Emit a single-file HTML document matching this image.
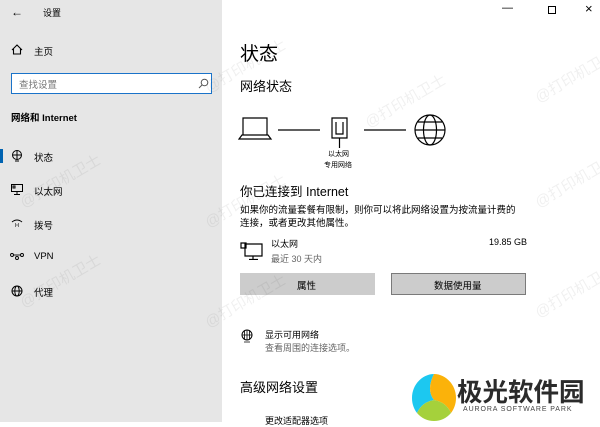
<!DOCTYPE html>
<html><head><meta charset="utf-8"><style>
*{margin:0;padding:0;box-sizing:border-box}
body{width:600px;height:422px;overflow:hidden;position:relative;background:#fff;font-family:"Liberation Sans","Noto Sans CJK SC",sans-serif;color:#000}
.side{position:absolute;left:0;top:0;width:222px;height:422px;background:#e6e6e6}
.t{position:absolute;white-space:nowrap}
svg{position:absolute}
.wm{position:absolute;color:rgba(0,0,0,0.06);font-size:15px;transform:rotate(-30deg);white-space:nowrap}
</style></head><body>
<div class="side">
<div class="t" style="left:11px;top:5px;font-size:12px">←</div>
<div class="t" style="left:43px;top:6px;font-size:9px">设置</div>
<svg style="left:11px;top:44px" width="12" height="11" viewBox="0 0 12 11"><path d="M1 6L6 1l5 5M2.5 5v5h7V5" fill="none" stroke="#000" stroke-width="1.1"/></svg>
<div class="t" style="left:34px;top:44px;font-size:9.5px">主页</div>
<div style="position:absolute;left:11px;top:73px;width:201px;height:21px;background:#fff;border:1.5px solid #1a73c9"></div>
<div class="t" style="left:19px;top:77px;font-size:9.5px;color:#777">查找设置</div>
<svg style="left:198px;top:78px" width="11" height="11" viewBox="0 0 11 11"><circle cx="6.5" cy="4.5" r="3.3" fill="none" stroke="#555"/><path d="M4 7L1 10" stroke="#555"/></svg>
<div class="t" style="left:11px;top:110px;font-size:9.5px;font-weight:bold">网络和 Internet</div>
<div style="position:absolute;left:0;top:149px;width:3px;height:14px;background:#0063b1"></div>
<svg style="left:11px;top:150px" width="12" height="12" viewBox="0 0 12 12"><circle cx="6" cy="5" r="4.5" fill="none" stroke="#000"/><path d="M1.5 5h9M6 .5v9M4 11h4" stroke="#000" fill="none"/></svg>
<div class="t" style="left:34px;top:150px;font-size:9.5px">状态</div>
<svg style="left:11px;top:184px" width="12" height="11" viewBox="0 0 12 11"><path d="M.5.5h11v7H.5zM6 7.5v3M3 10.5h6M2 2h2v2H2z" stroke="#000" fill="none"/></svg>
<div class="t" style="left:34px;top:184px;font-size:9.5px">以太网</div>
<svg style="left:11px;top:218px" width="12" height="10" viewBox="0 0 12 10"><path d="M1 4Q6 0 11 4" stroke="#000" fill="none"/><path d="M4 6h1M7 6h1M4 8h1M7 8h1M5.5 7h1" stroke="#000"/></svg>
<div class="t" style="left:34px;top:218px;font-size:9.5px">拨号</div>
<svg style="left:10px;top:252px" width="14" height="8" viewBox="0 0 14 8"><circle cx="2" cy="3" r="1.5" fill="none" stroke="#000" stroke-width=".9"/><circle cx="7" cy="6" r="1.5" fill="none" stroke="#000" stroke-width=".9"/><circle cx="12" cy="3" r="1.5" fill="none" stroke="#000" stroke-width=".9"/><path d="M3.5 3h7" stroke="#000" stroke-width=".9"/></svg>
<div class="t" style="left:34px;top:251px;font-size:9.5px">VPN</div>
<svg style="left:11px;top:285px" width="12" height="12" viewBox="0 0 12 12"><circle cx="6" cy="6" r="5" fill="none" stroke="#000"/><ellipse cx="6" cy="6" rx="2.2" ry="5" fill="none" stroke="#000"/><path d="M1 6h10" stroke="#000"/></svg>
<div class="t" style="left:34px;top:285px;font-size:9.5px">代理</div>
</div>
<div class="t" style="left:502px;top:2px;font-size:11px">—</div>
<div style="position:absolute;left:548px;top:6px;width:8px;height:8px;border:1px solid #000"></div>
<div class="t" style="left:585px;top:1px;font-size:13px">×</div>
<div class="t" style="left:240px;top:39px;font-size:19px">状态</div>
<div class="t" style="left:240px;top:76px;font-size:13px">网络状态</div>
<svg style="left:238px;top:114px" width="212" height="34" viewBox="0 0 212 34">
<g fill="none" stroke="#000" stroke-width="1.2">
<path d="M5 4h24v17H5zM1 25h32l-3-4H4z"/>
<path d="M40 16h42M126 16h42"/>
<path d="M94 4h15v20H94zM98 8v12h7V8M101.5 24v10"/>
<circle cx="192" cy="16" r="15"/><ellipse cx="192" cy="16" rx="6.5" ry="15"/><path d="M177 16h30M180 8h24M180 24h24"/>
</g></svg>
<div class="t" style="left:328px;top:149px;font-size:7px">以太网</div>
<div class="t" style="left:324px;top:160px;font-size:7px">专用网络</div>
<div class="t" style="left:240px;top:181px;font-size:12.5px">你已连接到 Internet</div>
<div class="t" style="left:240px;top:202px;font-size:9.5px">如果你的流量套餐有限制，则你可以将此网络设置为按流量计费的</div>
<div class="t" style="left:240px;top:215px;font-size:9.5px">连接，或者更改其他属性。</div>
<svg style="left:240px;top:242px" width="24" height="18" viewBox="0 0 24 18"><path d="M5 2h17v12H5zM13 14v3M9 17.5h9M1 1h5v5H1z" stroke="#000" fill="none" stroke-width="1.2"/></svg>
<div class="t" style="left:271px;top:237px;font-size:9px">以太网</div>
<div class="t" style="left:271px;top:252px;font-size:9px;color:#666">最近 30 天内</div>
<div class="t" style="left:489px;top:237px;font-size:9px">19.85 GB</div>
<div style="position:absolute;left:240px;top:273px;width:135px;height:22px;background:#ccc"></div>
<div class="t" style="left:297px;top:278px;font-size:9.5px">属性</div>
<div style="position:absolute;left:391px;top:273px;width:135px;height:22px;background:#ccc;border:1.5px solid #7a7a7a"></div>
<div class="t" style="left:434px;top:278px;font-size:9.5px">数据使用量</div>
<svg style="left:240px;top:329px" width="14" height="14" viewBox="0 0 14 14"><circle cx="7" cy="6" r="5" fill="none" stroke="#000"/><path d="M2 6h10M7 1v10M4 13h6M4.5 2v8M9.5 2v8" stroke="#000" fill="none" stroke-width=".8"/></svg>
<div class="t" style="left:265px;top:328px;font-size:9px">显示可用网络</div>
<div class="t" style="left:265px;top:341px;font-size:9px;color:#666">查看周围的连接选项。</div>
<div class="t" style="left:240px;top:377px;font-size:13px">高级网络设置</div>
<div class="t" style="left:265px;top:414px;font-size:9px">更改适配器选项</div>
<svg style="left:410px;top:372px" width="48" height="50" viewBox="0 0 48 50">
<path d="M24 2C13 2 2 12 2 26c0 6 2 11 5 15Q12 30 24 28Q16 18 24 2z" fill="#1cc8f0"/>
<path d="M24 2C35 2 46 12 46 26c0 6-2 11-5 15Q36 30 24 28Q16 18 24 2z" fill="#fbb20a"/>
<path d="M7 41Q14 49 24 49Q34 49 41 41Q36 30 24 28Q12 30 7 41z" fill="#a5d13b"/>
</svg>
<div class="t" style="left:457px;top:372px;font-size:25.5px;font-weight:bold;color:#2b2b2b">极光软件园</div>
<div class="t" style="left:463px;top:406px;font-size:7px;color:#444;letter-spacing:.9px">AURORA SOFTWARE PARK</div>
<div class="wm" style="left:200px;top:55px">@打印机卫士</div>
<div class="wm" style="left:360px;top:90px">@打印机卫士</div>
<div class="wm" style="left:530px;top:65px">@打印机卫士</div>
<div class="wm" style="left:15px;top:170px">@打印机卫士</div>
<div class="wm" style="left:200px;top:190px">@打印机卫士</div>
<div class="wm" style="left:530px;top:170px">@打印机卫士</div>
<div class="wm" style="left:15px;top:270px">@打印机卫士</div>
<div class="wm" style="left:200px;top:290px">@打印机卫士</div>
<div class="wm" style="left:530px;top:280px">@打印机卫士</div>
</body></html>
